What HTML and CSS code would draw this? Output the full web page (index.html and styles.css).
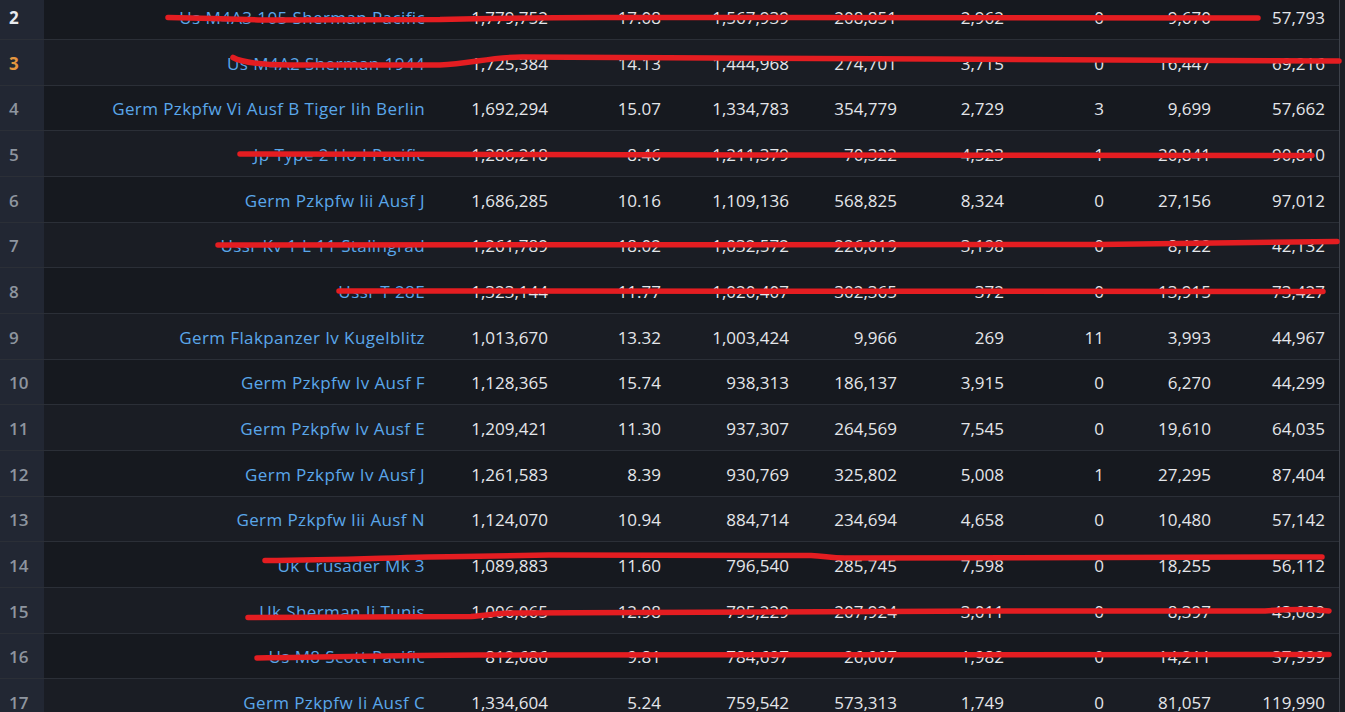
FILE: index.html
```html
<!DOCTYPE html>
<html lang="en">
<head>
<meta charset="utf-8">
<title>Vehicle stats</title>
<link rel="stylesheet" href="styles.css">
</head>
<body>
<div class="page">
  <div class="table">
    <div class="row"><div class="idx first">2</div><a class="name">Us M4A3 105 Sherman Pacific</a><span class="num">1,779,752</span><span class="num">17.08</span><span class="num">1,567,939</span><span class="num">208,851</span><span class="num">2,962</span><span class="num">0</span><span class="num">9,670</span><span class="num">57,793</span></div>
    <div class="row alt"><div class="idx second">3</div><a class="name">Us M4A2 Sherman 1944</a><span class="num">1,725,384</span><span class="num">14.13</span><span class="num">1,444,968</span><span class="num">274,701</span><span class="num">3,715</span><span class="num">0</span><span class="num">16,447</span><span class="num">69,216</span></div>
    <div class="row"><div class="idx">4</div><a class="name">Germ Pzkpfw Vi Ausf B Tiger Iih Berlin</a><span class="num">1,692,294</span><span class="num">15.07</span><span class="num">1,334,783</span><span class="num">354,779</span><span class="num">2,729</span><span class="num">3</span><span class="num">9,699</span><span class="num">57,662</span></div>
    <div class="row alt"><div class="idx">5</div><a class="name">Jp Type 2 Ho I Pacific</a><span class="num">1,286,218</span><span class="num">8.46</span><span class="num">1,211,379</span><span class="num">70,322</span><span class="num">4,523</span><span class="num">1</span><span class="num">20,841</span><span class="num">90,810</span></div>
    <div class="row"><div class="idx">6</div><a class="name">Germ Pzkpfw Iii Ausf J</a><span class="num">1,686,285</span><span class="num">10.16</span><span class="num">1,109,136</span><span class="num">568,825</span><span class="num">8,324</span><span class="num">0</span><span class="num">27,156</span><span class="num">97,012</span></div>
    <div class="row alt"><div class="idx">7</div><a class="name">Ussr Kv 1 L 11 Stalingrad</a><span class="num">1,261,789</span><span class="num">18.02</span><span class="num">1,032,572</span><span class="num">226,019</span><span class="num">3,198</span><span class="num">0</span><span class="num">8,122</span><span class="num">42,132</span></div>
    <div class="row"><div class="idx">8</div><a class="name">Ussr T 28E</a><span class="num">1,323,144</span><span class="num">11.77</span><span class="num">1,020,407</span><span class="num">302,365</span><span class="num">372</span><span class="num">0</span><span class="num">13,915</span><span class="num">73,427</span></div>
    <div class="row alt"><div class="idx">9</div><a class="name">Germ Flakpanzer Iv Kugelblitz</a><span class="num">1,013,670</span><span class="num">13.32</span><span class="num">1,003,424</span><span class="num">9,966</span><span class="num">269</span><span class="num">11</span><span class="num">3,993</span><span class="num">44,967</span></div>
    <div class="row"><div class="idx">10</div><a class="name">Germ Pzkpfw Iv Ausf F</a><span class="num">1,128,365</span><span class="num">15.74</span><span class="num">938,313</span><span class="num">186,137</span><span class="num">3,915</span><span class="num">0</span><span class="num">6,270</span><span class="num">44,299</span></div>
    <div class="row alt"><div class="idx">11</div><a class="name">Germ Pzkpfw Iv Ausf E</a><span class="num">1,209,421</span><span class="num">11.30</span><span class="num">937,307</span><span class="num">264,569</span><span class="num">7,545</span><span class="num">0</span><span class="num">19,610</span><span class="num">64,035</span></div>
    <div class="row"><div class="idx">12</div><a class="name">Germ Pzkpfw Iv Ausf J</a><span class="num">1,261,583</span><span class="num">8.39</span><span class="num">930,769</span><span class="num">325,802</span><span class="num">5,008</span><span class="num">1</span><span class="num">27,295</span><span class="num">87,404</span></div>
    <div class="row alt"><div class="idx">13</div><a class="name">Germ Pzkpfw Iii Ausf N</a><span class="num">1,124,070</span><span class="num">10.94</span><span class="num">884,714</span><span class="num">234,694</span><span class="num">4,658</span><span class="num">0</span><span class="num">10,480</span><span class="num">57,142</span></div>
    <div class="row"><div class="idx">14</div><a class="name">Uk Crusader Mk 3</a><span class="num">1,089,883</span><span class="num">11.60</span><span class="num">796,540</span><span class="num">285,745</span><span class="num">7,598</span><span class="num">0</span><span class="num">18,255</span><span class="num">56,112</span></div>
    <div class="row alt"><div class="idx">15</div><a class="name">Uk Sherman Ii Tunis</a><span class="num">1,006,065</span><span class="num">12.98</span><span class="num">795,229</span><span class="num">207,924</span><span class="num">3,011</span><span class="num">0</span><span class="num">8,397</span><span class="num">43,089</span></div>
    <div class="row"><div class="idx">16</div><a class="name">Us M8 Scott Pacific</a><span class="num">812,686</span><span class="num">9.81</span><span class="num">784,697</span><span class="num">26,007</span><span class="num">1,982</span><span class="num">0</span><span class="num">14,211</span><span class="num">37,999</span></div>
    <div class="row alt"><div class="idx">17</div><a class="name">Germ Pzkpfw Ii Ausf C</a><span class="num">1,334,604</span><span class="num">5.24</span><span class="num">759,542</span><span class="num">573,313</span><span class="num">1,749</span><span class="num">0</span><span class="num">81,057</span><span class="num">119,990</span></div>
  </div>
  <svg class="marks" width="1345" height="712" viewBox="0 0 1345 712" aria-hidden="true">
    <g fill="none" stroke="#e41d21" stroke-width="5.5" stroke-linecap="round" stroke-linejoin="round">
      <path d="M168,17.5 Q215,18.5 262,20 L440,19.5 Q520,17.5 600,17.5 L1258,18"/>
      <path d="M233,57.5 Q245,64.5 290,65 L440,65 C470,64 490,57 522,57 L930,59 L1339,61"/>
      <path d="M240,154 L760,155 L1312,155.5"/>
      <path d="M218,245 L1100,244.5 L1337,241.5"/>
      <path d="M339,291 L1323,291.5"/>
      <path d="M265,560.5 C350,560 400,557 464,556.5 L549,555 L811,555.5 C825,556 830,558 845,558 L1322,557"/>
      <path d="M248,617.5 L471,616.5 C490,615 500,613 514,613 L1000,611 L1265,611 C1290,609 1310,609 1329,611"/>
      <path d="M257,658 C350,657 420,655 478,655 L1329,654.5"/>
    </g>
  </svg>
</div>
</body>
</html>
```

FILE: styles.css
```css
html, body {
  margin: 0;
  padding: 0;
  overflow: hidden;
  background: #1c1f25;
}

body {
  font-family: "Open Sans", "Noto Sans", sans-serif;
  font-size: 17px;
  color: #e4e6ea;
}

.page {
  position: relative;
  width: 1345px;
  height: 712px;
  overflow: hidden;
}

.table {
  width: 1340px;
  margin-top: -5.67px;
  border-right: 1px solid #3d414a;
  box-sizing: border-box;
}

.row {
  display: grid;
  grid-template-columns: 44px 395px 123px 113px 128px 108px 107px 100px 107px 114px;
  height: 45.67px;
  box-sizing: border-box;
  border-bottom: 1px solid #2b2f37;
  background: #16191f;
}

.row.alt {
  background: #1a1d24;
}

.idx {
  display: flex;
  align-items: center;
  padding-left: 9px;
  padding-top: 2px;
  background: #222733;
  color: #8e959f;
  font-weight: 600;
}

.idx.first {
  color: #e8eaee;
  font-weight: 700;
}

.idx.second {
  color: #e5963f;
  font-weight: 700;
}

.name,
.num {
  display: flex;
  align-items: center;
  justify-content: flex-end;
  padding-right: 14px;
  padding-top: 2px;
  white-space: nowrap;
}

.name {
  color: #5aa7ea;
  text-decoration: none;
  letter-spacing: 0.4px;
}

.marks {
  position: absolute;
  left: 0;
  top: 0;
  pointer-events: none;
}
```
